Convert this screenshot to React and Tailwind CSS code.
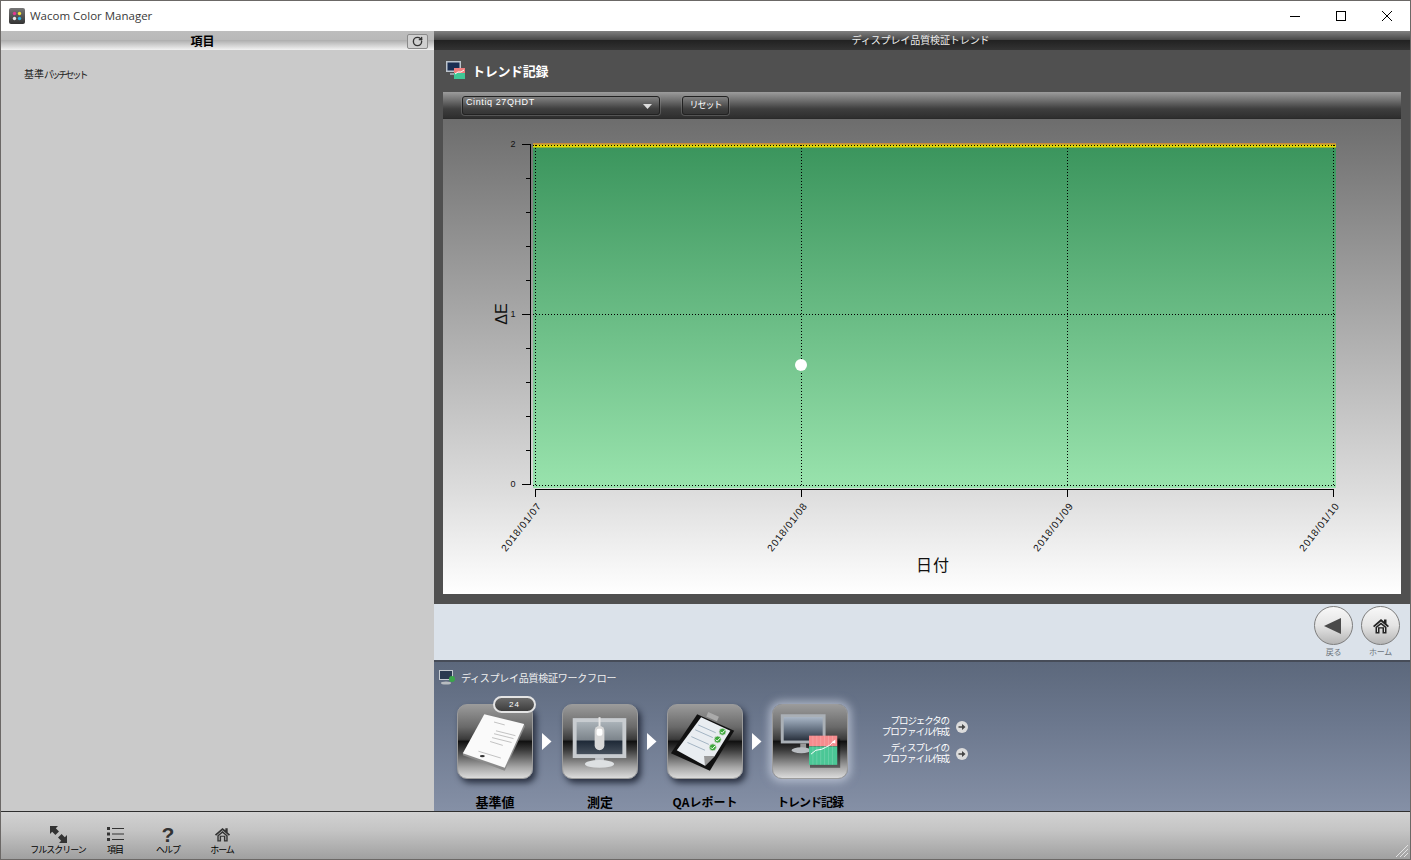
import { RotateCw } from 'lucide-react';

const JP = '[font-family:"Noto_Sans_CJK_JP","Liberation_Sans",sans-serif]';

const dates = [
    { x: 535, label: '2018 / 01 / 07' },
    { x: 801, label: '2018 / 01 / 08' },
    { x: 1067, label: '2018 / 01 / 09' },
    { x: 1333, label: '2018 / 01 / 10' },
];

function HomeIcon({ size = 18, color = '#222' }) {
    return (
        <svg width={size} height={size} viewBox="0 0 18 18">
            <path d="M1 9 L9 2 L12 4.6 V2.5 H14.5 V6.8 L17 9 L15.8 10.3 L9 4.4 L2.2 10.3 Z" fill={color} />
            <path d="M3.5 10 L9 5.4 L14.5 10 V16.5 H10.5 V11.5 H7.5 V16.5 H3.5 Z M5 10.7 V15 H6 V10.2 H12 V15 H13 V10.7 L9 7.4 Z" fill={color} fillRule="evenodd" />
        </svg>
    );
}

function TrendChart() {
    const minor = [];
    for (let i = 1; i < 10; i++) minor.push(144 + i * 34);
    return (
        <svg viewBox="443 119 958 475" className="block w-full h-full">
            <defs>
                <linearGradient id="chartbg" x1="0" y1="0" x2="0" y2="1">
                    <stop offset="0" stopColor="#6d6d6d" />
                    <stop offset="0.78" stopColor="#dcdcdc" />
                    <stop offset="1" stopColor="#ffffff" />
                </linearGradient>
                <linearGradient id="plot" x1="0" y1="0" x2="0" y2="1">
                    <stop offset="0" stopColor="#3b955d" />
                    <stop offset="1" stopColor="#99e3ad" />
                </linearGradient>
            </defs>
            <rect x="443" y="119" width="958" height="475" fill="url(#chartbg)" />
            <rect x="533" y="147" width="803" height="341" fill="url(#plot)" />
            <rect x="533" y="143" width="803" height="1.5" fill="#c98a3c" />
            <rect x="533" y="144.5" width="803" height="3" fill="#e6d800" />
            <g stroke="#000" strokeWidth="1" strokeDasharray="1 2" shapeRendering="crispEdges">
                <line x1="533" x2="1336" y1="145.5" y2="145.5" />
                <line x1="533" x2="1336" y1="314.5" y2="314.5" />
                <line x1="533" x2="1336" y1="485.5" y2="485.5" />
                {dates.map((d) => <line key={d.x} x1={d.x + 0.5} x2={d.x + 0.5} y1="145" y2="486" />)}
            </g>
            <g stroke="#000" strokeWidth="1" shapeRendering="crispEdges">
                <line x1="530.5" x2="530.5" y1="144" y2="484" />
                <line x1="522" x2="531" y1="144.5" y2="144.5" />
                <line x1="522" x2="531" y1="314.5" y2="314.5" />
                <line x1="522" x2="531" y1="484.5" y2="484.5" />
                {minor.filter((y) => y !== 314).map((y) => <line key={y} x1="526" x2="531" y1={y + 0.5} y2={y + 0.5} />)}
                <line x1="535" x2="1334" y1="489.5" y2="489.5" />
                {dates.map((d) => <line key={d.x} x1={d.x + 0.5} x2={d.x + 0.5} y1="489" y2="497" />)}
            </g>
            <circle cx="801" cy="365" r="6" fill="#fff" />
            <g fontFamily="Liberation Sans, sans-serif" fontSize="9" fill="#111">
                <text x="513" y="147" textAnchor="middle">2</text>
                <text x="513" y="317" textAnchor="middle">1</text>
                <text x="513" y="487" textAnchor="middle">0</text>
                {dates.map((d) => (
                    <text key={d.x} x={d.x + 7} y={506} textAnchor="end" fontSize="10" transform={`rotate(-52 ${d.x + 7} 506)`} letterSpacing="0.85">
                        {d.label.replace(/ /g, '')}
                    </text>
                ))}
            </g>
            <text x="507" y="314" fontFamily="Liberation Sans, sans-serif" fontSize="16" fill="#111" textAnchor="middle" transform="rotate(-90 507 314)">ΔE</text>
            <text x="933" y="571" fontFamily="Noto Sans CJK JP, sans-serif" fontSize="16" letterSpacing="1" fill="#111" textAnchor="middle">日付</text>
        </svg>
    );
}

function MiniTrendIcon() {
    return (
        <svg width="20" height="19" viewBox="0 0 20 19">
            <rect x="0" y="0" width="15" height="11" fill="#bcc4cc" />
            <rect x="1.5" y="1.5" width="12" height="8" fill="#1c2f52" />
            <rect x="4" y="12" width="8" height="2" fill="#9aa0a8" />
            <rect x="8" y="7" width="11" height="5" fill="#f27f7f" />
            <rect x="8" y="12" width="11" height="6" fill="#3fc795" />
            <path d="M9 13 L12 11 L15 11 L18 9" stroke="#fff" strokeWidth="1" fill="none" />
        </svg>
    );
}

function DocIcon() {
    return (
        <svg viewBox="0 0 76 74" className="w-full h-full">
            <polygon points="5,51 48,67 69,21 67,19 47,63 5,48" fill="#8a8a8a" />
            <polygon points="27,9 68,19 48,64 5,49" fill="#fafafa" />
            <g stroke="#999" strokeWidth="0.6">
                <line x1="37" y1="17" x2="48" y2="20" />
                <line x1="39" y1="26" x2="59" y2="31" />
                <line x1="37" y1="29" x2="57" y2="34" />
                <line x1="35" y1="33" x2="55" y2="38" />
                <line x1="33" y1="37" x2="46" y2="41" />
                <line x1="21" y1="47" x2="44" y2="54" />
            </g>
            <ellipse cx="25" cy="52" rx="2.5" ry="1.2" fill="#333" />
        </svg>
    );
}

function MonitorIcon() {
    return (
        <svg viewBox="0 0 76 74" className="w-full h-full">
            <defs>
                <linearGradient id="scr" x1="0" y1="0" x2="0" y2="1">
                    <stop offset="0" stopColor="#aab2b8" />
                    <stop offset="0.55" stopColor="#7d858c" />
                    <stop offset="0.6" stopColor="#1f2a38" />
                    <stop offset="1" stopColor="#46505c" />
                </linearGradient>
            </defs>
            <rect x="10" y="13" width="55" height="41" fill="#c8ccd0" />
            <rect x="14" y="17" width="47" height="33" fill="url(#scr)" />
            <rect x="33" y="54" width="9" height="5" fill="#c0c4c8" />
            <ellipse cx="37.5" cy="60" rx="15" ry="4" fill="#dde0e2" />
            <rect x="36.5" y="12" width="2" height="10" fill="#e6e6e6" />
            <rect x="32.5" y="21" width="10" height="25" rx="5" fill="#d8d8d8" />
            <rect x="34.5" y="24" width="6" height="7" rx="2" fill="#fff" />
        </svg>
    );
}

function ClipboardIcon() {
    return (
        <svg viewBox="0 0 76 74" className="w-full h-full">
            <polygon points="30,9 68,26 43,67 3,49" fill="#111" />
            <polygon points="34,12 64,26 48,52 38,62 9,46" fill="#e9edf1" />
            <polygon points="38,62 48,52 37,52" fill="#9a9a9a" />
            <rect x="40" y="9" width="12" height="5" fill="#aaa" transform="rotate(24 46 11)" />
            <g stroke="#8fa3b6" strokeWidth="0.8">
                <line x1="31" y1="20" x2="49" y2="28" />
                <line x1="28" y1="25" x2="46" y2="33" />
                <line x1="24" y1="32" x2="42" y2="40" />
                <line x1="20" y1="38" x2="38" y2="46" />
            </g>
            {[[56, 27], [51, 35], [46, 43]].map(([x, y]) => (
                <g key={x}>
                    <circle cx={x} cy={y} r="3.6" fill="#3ca83c" stroke="#ddd" strokeWidth="0.8" />
                    <path d={`M${x - 2} ${y} l1.6 1.6 l2.6 -3`} stroke="#fff" strokeWidth="1" fill="none" />
                </g>
            ))}
        </svg>
    );
}

function TrendIcon() {
    return (
        <svg viewBox="0 0 76 74" className="w-full h-full">
            <defs>
                <linearGradient id="scr2" x1="0" y1="0" x2="0" y2="1">
                    <stop offset="0" stopColor="#a9b6c6" />
                    <stop offset="0.6" stopColor="#5c6878" />
                    <stop offset="1" stopColor="#28303c" />
                </linearGradient>
            </defs>
            <rect x="8" y="9" width="46" height="30" fill="#aab0b6" />
            <rect x="11" y="12" width="40" height="24" fill="url(#scr2)" />
            <rect x="28" y="39" width="6" height="5" fill="#999" />
            <ellipse cx="29" cy="46" rx="10" ry="3" fill="#b8bcc0" />
            <rect x="38" y="34" width="31" height="30" fill="#000" opacity="0.45" />
            <rect x="37" y="31" width="29" height="11" fill="#f58c8e" />
            <rect x="37" y="42" width="29" height="19" fill="#4cc796" />
            <g stroke="#fff" strokeWidth="0.4" opacity="0.4">
                {[41, 45, 49, 53, 57, 61].map((x) => <line key={x} x1={x} x2={x} y1="31" y2="61" />)}
            </g>
            <path d="M39 50 L44 46 L50 45 L54 43 L58 41 L62 37" stroke="#fff" strokeWidth="1" fill="none" />
            <polygon points="60,38 64,35 64,39" fill="#fff" />
        </svg>
    );
}

function Tile({ label, glow, children, badge }) {
    return (
        <div className="relative w-[76px] flex flex-col items-center shrink-0">
            <div className={`w-[76px] h-[75px] rounded-[10px] border border-[#9b9b9b] overflow-hidden bg-[linear-gradient(180deg,#9a9a9a_0%,#6a6a6a_30%,#3a3a3a_47%,#111_50%,#3c3c3c_62%,#a5a5a5_85%,#dcdcdc_100%)] ${glow ? 'shadow-[0_0_8px_3px_rgba(225,232,245,0.55)]' : 'shadow-[3px_4px_6px_rgba(15,20,35,0.75)]'}`}>
                {children}
            </div>
            {badge && (
                <div className="absolute -top-[8px] right-[-3px] w-[43px] h-[17px] rounded-full border-2 border-[#e4e4e4] bg-[linear-gradient(180deg,#6a6a6a,#3d3d3d)] flex items-center justify-center text-white text-[8px] leading-none tracking-[1px] [font-family:'Liberation_Sans',sans-serif]">
                    {badge}
                </div>
            )}
            <div className={`${JP} mt-[15px] whitespace-nowrap text-[13px] leading-[16px] font-bold text-black`}>{label}</div>
        </div>
    );
}

function Arrow() {
    return (
        <div className="w-[29px] h-[75px] flex items-center justify-center shrink-0 pr-[2px]">
            <svg width="10" height="17" viewBox="0 0 10 17"><polygon points="0,0 9.5,8.5 0,17" fill="#fff" /></svg>
        </div>
    );
}

function SideLink({ a, b }) {
    return (
        <div className="flex items-center gap-[7px]">
            <div className={`${JP} text-right text-white text-[9.5px] tracking-[-1.1px] leading-[11px] w-[90px] whitespace-nowrap`}>
                {a}<br />{b}
            </div>
            <div className="mt-[1px] w-[12px] h-[12px] rounded-full bg-[#dcdcdc] flex items-center justify-center">
                <svg width="8" height="8" viewBox="0 0 8 8"><path d="M0.5 3.2 H4 V1 L7.5 4 L4 7 V4.8 H0.5 Z" fill="#444" /></svg>
            </div>
        </div>
    );
}

function RoundButton({ label, children }) {
    return (
        <div className="flex flex-col items-center w-[39px]">
            <div className="w-[39px] h-[39px] rounded-full border border-[#7d7d7d] bg-[linear-gradient(180deg,#f8f8f8_0%,#e4e4e4_50%,#b5b5b5_100%)] flex items-center justify-center">
                {children}
            </div>
            <div className={`${JP} mt-px text-[8px] leading-[12px] tracking-[-0.3px] text-[#6d747c]`}>{label}</div>
        </div>
    );
}

function FootButton({ w, label, children }) {
    return (
        <div className={`${w} flex flex-col items-center`}>
            <div className="h-[20px] flex items-center justify-center">{children}</div>
            <div className={`${JP} text-[9px] leading-[12px] whitespace-nowrap tracking-[-1px] text-black`}>{label}</div>
        </div>
    );
}

export default function App() {
    return (
        <div className="w-[1411px] h-[860px] flex flex-col overflow-hidden border border-[#6b6866] bg-white">
            {/* title bar */}
            <div className="h-[30px] shrink-0 flex items-center bg-white">
                <div className="ml-[8px] w-[16px] h-[16px] rounded-[2px] bg-[linear-gradient(180deg,#777,#333)] flex items-center justify-center">
                    <svg width="10" height="10" viewBox="0 0 10 10">
                        <circle cx="2.5" cy="2.5" r="1.7" fill="#e0388f" />
                        <circle cx="7.5" cy="2.5" r="1.7" fill="#f2e23c" />
                        <circle cx="2.5" cy="7.5" r="1.7" fill="#e8e8e8" />
                        <circle cx="7.5" cy="7.5" r="1.7" fill="#2bb0e0" />
                    </svg>
                </div>
                <div className="ml-[5px] text-[11.5px] text-[#3a3a3a] [font-family:'Open_Sans',sans-serif]">Wacom Color Manager</div>
                <div className="ml-auto flex items-center text-black">
                    <div className="w-[46px] h-[30px] flex items-center justify-center"><div className="w-[10px] h-px bg-black" /></div>
                    <div className="w-[46px] h-[30px] flex items-center justify-center"><div className="w-[10px] h-[10px] border border-black" /></div>
                    <div className="w-[46px] h-[30px] flex items-center justify-center">
                        <svg width="10" height="10" viewBox="0 0 10 10"><path d="M0 0 L10 10 M10 0 L0 10" stroke="#000" strokeWidth="1" /></svg>
                    </div>
                </div>
            </div>

            <div className="flex flex-1 min-h-0">
                {/* left list */}
                <div className="w-[433px] shrink-0 bg-[#cacaca] flex flex-col">
                    <div className="h-[19px] shrink-0 flex items-center bg-[linear-gradient(180deg,#bdbdbd_0%,#b9b9b9_45%,#b0b0b0_50%,#f2f2f2_100%)]">
                        <div className={`${JP} flex-1 text-center text-[12px] font-bold text-black leading-none pt-px`}>項目</div>
                        <div className="ml-[3px] mr-[6px] mt-[2px] w-[21px] h-[15px] rounded-[2px] border border-[#8a8a8a] bg-[#d0d0d0] flex items-center justify-center">
                            <RotateCw size={11} strokeWidth={3} color="#333" />
                        </div>
                    </div>
                    <div className={`${JP} ml-[23px] mt-[17px] text-[10px] leading-[14px] text-[#222] whitespace-nowrap`}>
                        基準<span className="text-[9.5px] tracking-[-2.5px]">パッチセット</span>
                    </div>
                </div>

                {/* right side */}
                <div className="flex-1 min-w-0 flex flex-col">
                    <div className={`${JP} h-[19px] shrink-0 flex items-center justify-center pr-[3px] pb-[2px] text-[10px] tracking-[-0.1px] leading-none text-[#eeeeee] bg-[linear-gradient(180deg,#808080_0%,#4a4a4a_45%,#222_50%,#333_100%)]`}>
                        ディスプレイ品質検証トレンド
                    </div>
                    <div className="bg-[#505050] pl-[9px] pr-[9px] pb-[10px] shrink-0">
                        <div className="h-[42px] flex items-center pl-[3px] pb-[1px]">
                            <MiniTrendIcon />
                            <div className={`${JP} ml-[6px] text-[13px] tracking-[-0.3px] font-bold text-white leading-none`}>トレンド記録</div>
                        </div>
                        <div className="h-[27px] pl-[19px] flex items-start pt-[4px] border-b border-[#2a2a2a] bg-[linear-gradient(180deg,#9c9c9c_0%,#6b6b6b_35%,#3e3e3e_65%,#2e2e2e_100%)]">
                            <div className="w-[198px] h-[19px] rounded-[3px] border border-[#222] shadow-[0_0_0_1px_rgba(150,150,150,0.35)] flex items-start justify-between pl-[3px] pr-[7px]">
                                <span className="text-[9px] leading-[11px] text-white tracking-[0.6px] [font-family:'Liberation_Sans',sans-serif]">Cintiq 27QHDT</span>
                                <svg className="mt-[7px]" width="9" height="5" viewBox="0 0 9 5"><polygon points="0,0 9,0 4.5,5" fill="#ddd" /></svg>
                            </div>
                            <div className={`${JP} ml-[22px] w-[47px] h-[19px] rounded-[3px] border border-[#222] shadow-[0_0_0_1px_rgba(150,150,150,0.35)] flex items-center justify-center text-[9px] text-white leading-none tracking-[-1px] pb-[2px]`}>
                                リセット
                            </div>
                        </div>
                        <div className="h-[475px]">
                            <TrendChart />
                        </div>
                    </div>

                    {/* nav strip */}
                    <div className="h-[56px] shrink-0 bg-[#dbe2ea] flex justify-end gap-[8px] pt-[2px] pr-[10px]">
                        <RoundButton label="戻る">
                            <svg className="mr-[3px]" width="17" height="16" viewBox="0 0 17 16"><polygon points="0,8 17,0 17,16" fill="#4a4a4a" /></svg>
                        </RoundButton>
                        <RoundButton label="ホーム">
                            <HomeIcon size={18} color="#222" />
                        </RoundButton>
                    </div>

                    {/* workflow */}
                    <div className="flex-1 min-h-0 overflow-hidden bg-[linear-gradient(180deg,#5c687c_0%,#6b778d_40%,#8590a6_100%)] border-t-2 border-[#464c58]">
                        <div className="h-[31px] pl-[5px] flex items-center">
                            <svg width="17" height="15" viewBox="0 0 17 15">
                                <rect x="0" y="0" width="14" height="10" fill="#c4cad0" />
                                <rect x="1" y="1" width="12" height="8" fill="#2a3a50" />
                                <ellipse cx="7" cy="13" rx="5" ry="1.5" fill="#b8bcc0" />
                                <circle cx="13" cy="9" r="3" fill="#3aa54a" />
                            </svg>
                            <div className={`${JP} ml-[5px] text-[10px] tracking-[-0.25px] leading-none text-[#f0f0f0]`}>ディスプレイ品質検証ワークフロー</div>
                        </div>
                        <div className="flex pl-[23px] pt-[11px]">
                            <Tile label="基準値" badge="24"><DocIcon /></Tile>
                            <Arrow />
                            <Tile label="測定"><MonitorIcon /></Tile>
                            <Arrow />
                            <Tile label={<span className="text-[12px]">QAレポート</span>}><ClipboardIcon /></Tile>
                            <Arrow />
                            <Tile label={<span className="text-[12px] tracking-[-1px]">トレンド記録</span>} glow><TrendIcon /></Tile>
                            <div className="ml-[11px] pt-[11px] flex flex-col gap-[5px]">
                                <SideLink a="プロジェクタの" b="プロファイル作成" />
                                <SideLink a="ディスプレイの" b="プロファイル作成" />
                            </div>
                        </div>
                    </div>
                </div>
            </div>

            {/* footer */}
            <div className="relative h-[48px] shrink-0 flex pl-[30px] pt-[12px] border-t border-[#2f2f2f] bg-[linear-gradient(180deg,#d2d2d2_0%,#c4c4c4_40%,#a0a0a0_100%)]">
                <FootButton w="w-[54px]" label="フルスクリーン">
                    <svg width="17" height="17" viewBox="0 0 17 17">
                        <path d="M0 0 H8 L5.8 2.2 L9 5.4 L5.4 9 L2.2 5.8 L0 8 Z" fill="#333" />
                        <path d="M17 17 H9 L11.2 14.8 L8 11.6 L11.6 8 L14.8 11.2 L17 9 Z" fill="#333" />
                    </svg>
                </FootButton>
                <FootButton w="w-[60px]" label="項目">
                    <svg width="17" height="14" viewBox="0 0 17 14">
                        <rect x="0" y="0" width="3" height="3" fill="#333" />
                        <rect x="0" y="5.5" width="3" height="3" fill="#333" />
                        <rect x="0" y="11" width="3" height="3" fill="#333" />
                        <rect x="5" y="1" width="12" height="1" fill="#333" />
                        <rect x="5" y="6.5" width="12" height="1" fill="#333" />
                        <rect x="5" y="12" width="12" height="1" fill="#333" />
                    </svg>
                </FootButton>
                <FootButton w="w-[46px]" label="ヘルプ">
                    <span className="text-[21px] leading-none font-bold text-[#333] [font-family:'Liberation_Sans',sans-serif]">?</span>
                </FootButton>
                <FootButton w="w-[62px]" label="ホーム">
                    <HomeIcon size={17} color="#333" />
                </FootButton>
                <svg className="absolute right-[2px] bottom-[2px]" width="12" height="12" viewBox="0 0 12 12">
                    <path d="M12 0 L0 12 M12 4 L4 12 M12 8 L8 12" stroke="#e2e2e2" strokeWidth="1" />
                </svg>
            </div>
        </div>
    );
}
